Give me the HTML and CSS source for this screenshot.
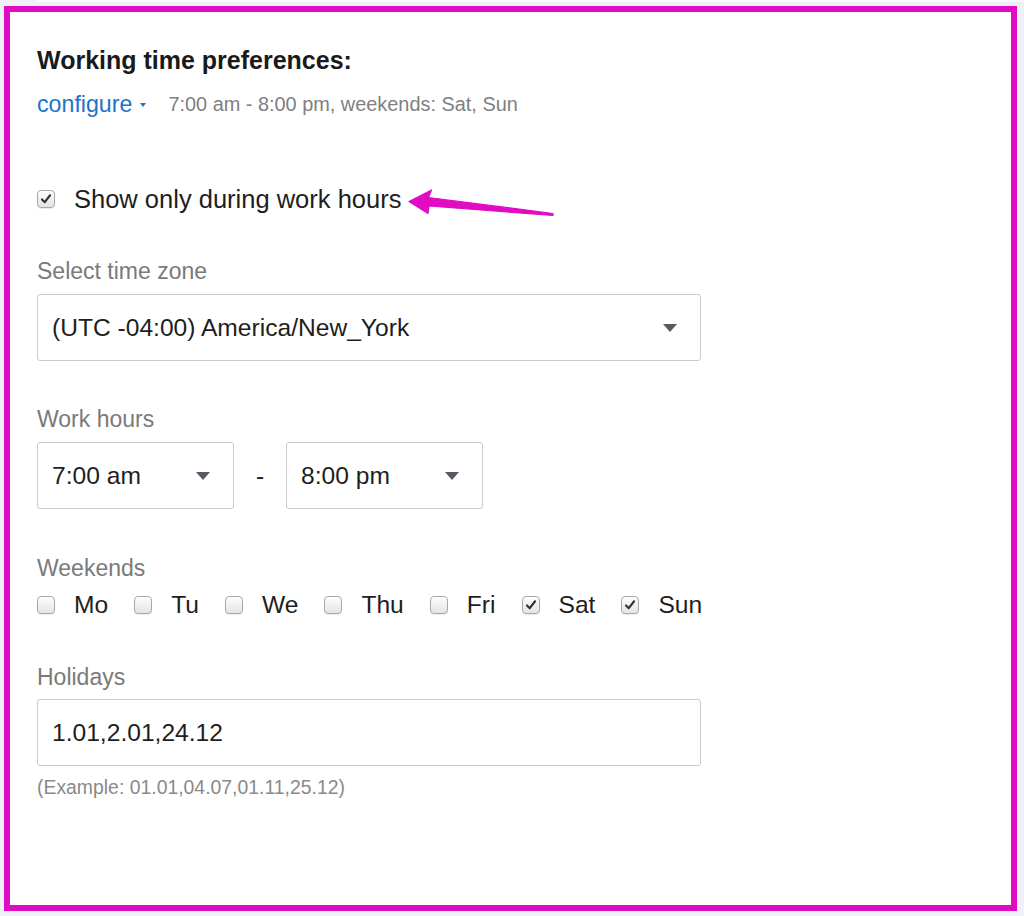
FILE: index.html
```html
<!DOCTYPE html>
<html>
<head>
<meta charset="utf-8">
<link rel="stylesheet" href="styles.css">
</head>
<body>
<div class="topstrip"></div>
<div class="frame">
  <h1 class="title">Working time preferences:</h1>
  <div class="summary-row">
    <span class="configure">configure<span class="mini-caret"></span></span>
    <span class="summary">7:00 am - 8:00 pm, weekends: Sat, Sun</span>
  </div>

  <label class="show-row">
    <span class="cb checked"><svg viewBox="0 0 18 18"><path d="M4.5 9.5 L7.6 12.6 L13.6 4.8" fill="none" stroke="#333" stroke-width="2.4" stroke-linecap="round" stroke-linejoin="round"/></svg></span>
    <span class="show-text">Show only during work hours</span>
  </label>

  <div class="field-label tz-label">Select time zone</div>
  <div class="select wide">
    <span class="select-text">(UTC -04:00) America/New_York</span>
    <span class="caret"></span>
  </div>

  <div class="field-label hours-label">Work hours</div>
  <div class="hours-row">
    <div class="select small">
      <span class="select-text">7:00 am</span>
      <span class="caret"></span>
    </div>
    <span class="dash">-</span>
    <div class="select small">
      <span class="select-text">8:00 pm</span>
      <span class="caret"></span>
    </div>
  </div>

  <div class="field-label weekends-label">Weekends</div>
  <div class="days">
    <label class="day"><span class="cb"></span><span class="day-text">Mo</span></label>
    <label class="day"><span class="cb"></span><span class="day-text">Tu</span></label>
    <label class="day"><span class="cb"></span><span class="day-text">We</span></label>
    <label class="day"><span class="cb"></span><span class="day-text">Thu</span></label>
    <label class="day"><span class="cb"></span><span class="day-text">Fri</span></label>
    <label class="day"><span class="cb checked"><svg viewBox="0 0 18 18"><path d="M4.5 9.5 L7.6 12.6 L13.6 4.8" fill="none" stroke="#333" stroke-width="2.4" stroke-linecap="round" stroke-linejoin="round"/></svg></span><span class="day-text">Sat</span></label>
    <label class="day"><span class="cb checked"><svg viewBox="0 0 18 18"><path d="M4.5 9.5 L7.6 12.6 L13.6 4.8" fill="none" stroke="#333" stroke-width="2.4" stroke-linecap="round" stroke-linejoin="round"/></svg></span><span class="day-text">Sun</span></label>
  </div>

  <div class="field-label holidays-label">Holidays</div>
  <div class="input wide"><span class="select-text">1.01,2.01,24.12</span></div>
  <div class="example">(Example: 01.01,04.07,01.11,25.12)</div>

  <svg class="arrow" viewBox="0 0 160 45" width="160" height="45">
    <path d="M9 21.5 L31.5 10 L28.5 17.5 L153 33.5 L153 35.5 L29 26 L28 33.5 Z" fill="#e20bc4" stroke="#e20bc4" stroke-width="1.2" stroke-linejoin="round"/>
  </svg>
</div>
</body>
</html>
```

FILE: styles.css
```css
html, body {
  margin: 0;
  padding: 0;
}
body {
  background: #eef2f6;
  font-family: "Liberation Sans", Arial, Helvetica, sans-serif;
  color: #1e1e1e;
  width: 1024px;
  height: 916px;
  overflow: hidden;
  position: relative;
}
.topstrip {
  height: 2px;
  margin-left: 36px;
  background: #f7f9fb;
}
.frame {
  position: relative;
  box-sizing: border-box;
  width: 1013px;
  height: 905px;
  margin: 4px 0 0 4px;
  border: 6px solid #e20bc4;
  background: #ffffff;
  padding: 33px 0 0 27px;
}
.title {
  margin: 0;
  font-size: 25px;
  font-weight: bold;
  line-height: 30px;
  color: #1a1a1a;
}
.summary-row {
  margin-top: 14px;
  height: 30px;
  display: flex;
  align-items: center;
}
.configure {
  font-size: 23.2px;
  color: #1d72cc;
  display: inline-flex;
  align-items: center;
}
.mini-caret {
  display: inline-block;
  width: 0;
  height: 0;
  border-left: 3.5px solid transparent;
  border-right: 3.5px solid transparent;
  border-top: 4px solid #1d72cc;
  margin-left: 8px;
  margin-top: 2px;
}
.summary {
  font-size: 19.9px;
  color: #808080;
  margin-left: 22px;
}
.show-row {
  margin-top: 64px;
  height: 32px;
  display: flex;
  align-items: center;
}
.cb {
  box-sizing: border-box;
  width: 18px;
  height: 18px;
  border: 1px solid #a8a8a8;
  border-radius: 4px;
  background: linear-gradient(#fdfdfd, #e4e4e4);
  box-shadow: inset 0 1px 0 #ffffff, 0 1px 1px rgba(0,0,0,0.08);
  display: inline-flex;
  flex: none;
}
.cb svg {
  width: 16px;
  height: 16px;
}
.show-text {
  font-size: 25.5px;
  margin-left: 19px;
  color: #1e1e1e;
}
.field-label {
  font-size: 23px;
  color: #7a7a7a;
  line-height: 28px;
}
.tz-label { margin-top: 42px; }
.hours-label { margin-top: 44px; }
.weekends-label { margin-top: 45px; }
.holidays-label { margin-top: 42px; }
.select, .input {
  box-sizing: border-box;
  height: 67px;
  border: 1px solid #c8cbcf;
  border-radius: 3px;
  background: #fff;
  display: flex;
  align-items: center;
  padding: 0 0 0 14px;
}
.wide {
  width: 664px;
  margin-top: 9px;
}
.select.wide {
  justify-content: space-between;
  padding-right: 23px;
}
.input.wide {
  margin-top: 8px;
}
.select-text {
  font-size: 24.6px;
  color: #1e1e1e;
}
.caret {
  width: 0;
  height: 0;
  border-left: 7.5px solid transparent;
  border-right: 7.5px solid transparent;
  border-top: 8px solid #555b62;
  margin-top: 1px;
}
.hours-row {
  margin-top: 9px;
  display: flex;
  align-items: center;
}
.select.small {
  width: 197px;
  justify-content: space-between;
  padding-right: 23px;
}
.dash {
  width: 52px;
  text-align: center;
  font-size: 24.6px;
  color: #1e1e1e;
}
.days {
  margin-top: 7px;
  height: 32px;
  display: flex;
  align-items: center;
}
.day {
  display: flex;
  align-items: center;
  margin-right: 26px;
}
.day-text {
  font-size: 24.6px;
  margin-left: 19px;
  color: #1e1e1e;
}
.example {
  margin-top: 9px;
  font-size: 19.4px;
  line-height: 24px;
  color: #8a8a8a;
}
.arrow {
  position: absolute;
  left: 390px;
  top: 168px;
}
```
